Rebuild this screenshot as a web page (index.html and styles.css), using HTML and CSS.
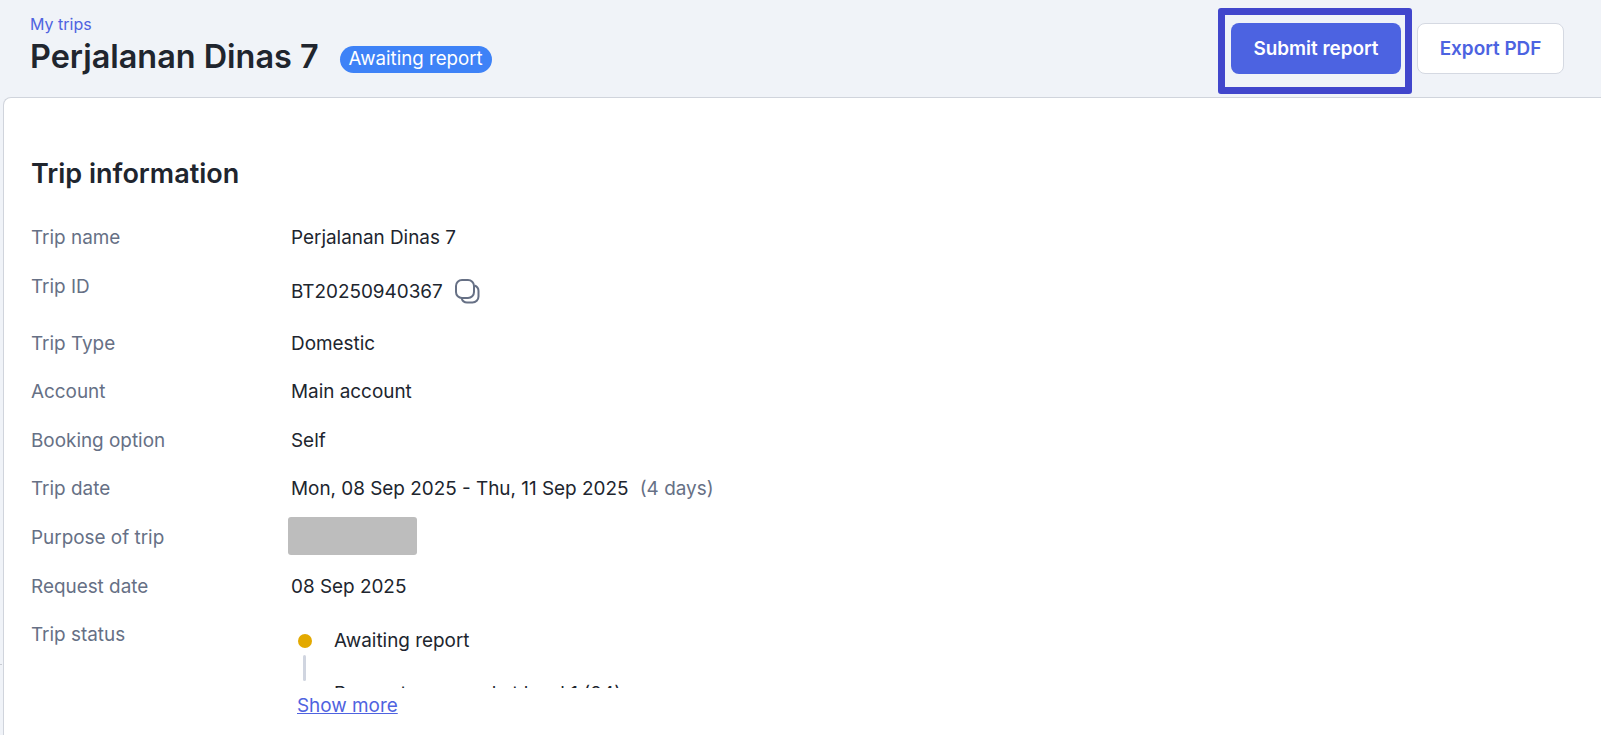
FILE: index.html
```html
<!DOCTYPE html>
<html lang="en">
<head>
    <meta charset="UTF-8">
    <title>Perjalanan Dinas 7</title>
    <link rel="stylesheet" href="styles.css">
</head>
<body>

<div class="page">
    <span class="edge-tick"></span>

    <header class="top-bar">
        <div class="top-title">
            <a class="crumb" href="#">My trips</a>
            <div class="title-row">
                <h1>Perjalanan Dinas 7</h1>
                <span class="pill">Awaiting report</span>
            </div>
        </div>
        <div class="top-actions">
            <div class="highlight">
                <button class="btn btn-primary">Submit report</button>
            </div>
            <button class="btn btn-outline">Export PDF</button>
        </div>
    </header>

    <main class="card">
        <h2>Trip information</h2>

        <div class="info-row">
            <div class="info-label">Trip name</div>
            <div class="info-value">Perjalanan Dinas 7</div>
        </div>
        <div class="info-row row-id">
            <div class="info-label">Trip ID</div>
            <div class="info-value id-value">
                BT20250940367
                <svg class="copy-icon" width="25" height="25" viewBox="0 0 25 25" fill="none" stroke="#667085" stroke-width="2">
                    <rect x="1" y="1" width="18" height="18" rx="6"/>
                    <path d="M19.500 6.500c2.300.8 4 2.800 4 5.500v5.500c0 3.300-2.700 6-6 6H12c-2.600 0-4.700-1.700-5.500-4.500"/>
                </svg>
            </div>
        </div>
        <div class="info-row">
            <div class="info-label">Trip Type</div>
            <div class="info-value">Domestic</div>
        </div>
        <div class="info-row">
            <div class="info-label">Account</div>
            <div class="info-value">Main account</div>
        </div>
        <div class="info-row">
            <div class="info-label">Booking option</div>
            <div class="info-value">Self</div>
        </div>
        <div class="info-row">
            <div class="info-label">Trip date</div>
            <div class="info-value">Mon, 08 Sep 2025 - Thu, 11 Sep 2025 <span class="muted">(4 days)</span></div>
        </div>
        <div class="info-row">
            <div class="info-label">Purpose of trip</div>
            <div class="info-value"><div class="redacted"></div></div>
        </div>
        <div class="info-row">
            <div class="info-label">Request date</div>
            <div class="info-value">08 Sep 2025</div>
        </div>
        <div class="info-row row-status">
            <div class="info-label">Trip status</div>
            <div class="info-value">
                <div class="timeline">
                    <div class="step">
                        <div class="marker">
                            <span class="dot"></span>
                            <span class="line"></span>
                        </div>
                        <div class="step-text">
                            <div>Awaiting report</div>
                            <div class="step-next">Request approved at level 1 (04)</div>
                        </div>
                    </div>
                </div>
                <a class="show-more" href="#">Show more</a>
            </div>
        </div>
    </main>
</div>

</body>
</html>
```

FILE: styles.css
```css
body {
    font-family: 'Inter', 'Liberation Sans', sans-serif;
    background-color: #fff;
    color: #20252e;
    margin: 0;
    height: 744px;
    overflow: hidden;
}
.page {
    position: relative;
    height: 735px;
    background-color: #f0f3f8;
}
/* little mark left of the card */
.edge-tick {
    position: absolute;
    left: 0;
    top: 664px;
    width: 2px;
    height: 1px;
    background-color: #c9ccd3;
}
.top-bar {
    display: flex;
    justify-content: space-between;
    height: 97px;
    box-sizing: border-box;
    padding: 8px 37px 0 30px;
}
.crumb {
    display: block;
    margin-top: 6px;
    color: #4f63e0;
    font-size: 16px;
    line-height: 20px;
    text-decoration: none;
}
.title-row {
    display: flex;
    align-items: center;
    margin-top: 3px;
}
h1 {
    margin: 0;
    font-size: 32.400px;
    line-height: 40px;
    font-weight: 600;
}
.pill {
    margin: 4px 0 0 21px;
    padding: 0 9px;
    height: 27px;
    line-height: 26px;
    font-size: 18.700px;
    color: #fff;
    background-color: #3e82f7;
    border-radius: 14px;
}
.top-actions {
    display: flex;
    align-items: flex-start;
}
.highlight {
    width: 194px;
    height: 86px;
    box-sizing: border-box;
    border: 7px solid #4146cc;
    border-radius: 3px;
    padding: 8px 6px;
    margin-right: 5px;
}
.btn {
    display: block;
    height: 51px;
    box-sizing: border-box;
    font-family: inherit;
    font-size: 18.900px;
    font-weight: 600;
    border-radius: 8px;
}
.btn-primary {
    width: 170px;
    background-color: #4c63e1;
    color: #fff;
    border: none;
}
.btn-outline {
    width: 147px;
    margin-top: 15px;
    background-color: #fff;
    color: #4c63e1;
    border: 1px solid #d5d9e2;
}
.card {
    margin-left: 3px;
    height: 638px;
    box-sizing: border-box;
    padding: 60px 0 0 27px;
    background-color: #fff;
    border: 1px solid #d0d4dc;
    border-right: none;
    border-bottom: none;
    border-top-left-radius: 8px;
}
h2 {
    margin: 0 0 34px;
    font-size: 27px;
    line-height: 32px;
    font-weight: 600;
}
.info-row {
    display: flex;
    height: 48.600px;
    font-size: 18.900px;
    line-height: 28px;
}
.info-label {
    width: 260px;
    color: #667085;
}
.row-id {
    height: 57px;
}
.id-value {
    display: flex;
    align-items: center;
    height: 38px;
}
.copy-icon {
    margin-left: 12px;
}
.muted {
    margin-left: 6px;
    color: #667085;
}
.redacted {
    width: 129px;
    height: 38px;
    margin: -7px 0 0 -3px;
    background-color: #bdbdbd;
    border-radius: 3px;
}
.timeline {
    height: 61px;
    overflow: hidden;
    padding-top: 6px;
}
.step {
    display: flex;
}
.marker {
    width: 43px;
    flex-shrink: 0;
    padding-left: 7px;
    box-sizing: border-box;
}
.dot {
    display: block;
    width: 14px;
    height: 14px;
    margin-top: 7px;
    background-color: #e3a900;
    border-radius: 50%;
}
.line {
    display: block;
    width: 3px;
    height: 26px;
    margin: 7px 0 0 5px;
    background-color: #d0d5e0;
    border-radius: 2px;
}
.step-next {
    margin-top: 25px;
}
.show-more {
    display: block;
    margin: 4px 0 0 6px;
    color: #4f63e0;
}
```
